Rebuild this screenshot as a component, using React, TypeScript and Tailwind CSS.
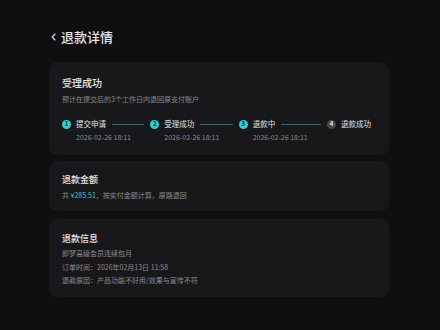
import { ReactNode } from 'react';

type Step = { label: string; time?: string; done: boolean };

const steps: Step[] = [
  { label: '提交申请', time: '2026-02-26 18:11', done: true },
  { label: '受理成功', time: '2026-02-26 18:11', done: true },
  { label: '退款中', time: '2026-02-26 18:11', done: true },
  { label: '退款成功', done: false }
];

function Card({ className, children }: { className?: string; children: ReactNode }) {
  return <section className={`w-[340px] rounded-[8px] bg-[#18181b] px-[13px] ${className ?? ''}`}>{children}</section>;
}

function StepDot({ index, done }: { index: number; done: boolean }) {
  return (
    <span
      className={`flex h-[9px] w-[9px] shrink-0 items-center justify-center rounded-full text-[6px] font-bold leading-none ${
        done ? 'bg-[#2fd1cf] text-[#0f2a2a]' : 'bg-[#46464b] text-[#e6e6e8]'
      }`}
    >
      {index}
    </span>
  );
}

export default function App() {
  return (
    <div className="h-[330px] w-[440px] overflow-hidden bg-[#0f0f11] pl-[49px] text-[#e8e8ea]" style={{ fontFamily: '"Noto Sans CJK SC", "Noto Sans", sans-serif' }}>
      <header className="mt-[28px] flex h-[18px] items-center">
        <svg width="5" height="8" viewBox="0 0 5 8" className="ml-[2px] mr-[10px]">
          <polyline points="4,1 1.2,4 4,7" fill="none" stroke="#e8e8ea" strokeWidth="1.1" strokeLinecap="round" strokeLinejoin="round" />
        </svg>
        <h1 className="-ml-[5px] text-[13px] font-medium leading-[18px]">退款详情</h1>
      </header>

      <Card className="mt-[16px] h-[93px] pt-[14px]">
        <h2 className="text-[10px] font-medium leading-[14px]">受理成功</h2>
        <p className="mt-[4px] text-[7px] leading-[10px] text-[#8b8b90]">预计在提交后的3个工作日内退回原支付账户</p>
        <div className="mr-[5px] mt-[15px] flex">
          {steps.map((step, i) => {
            const last = i === steps.length - 1;
            return (
              <div key={step.label} className={last ? 'shrink-0' : 'min-w-0 flex-1'}>
                <div className="flex h-[10px] items-center">
                  <StepDot index={i + 1} done={step.done} />
                  <span className="ml-[5px] whitespace-nowrap text-[7.5px] leading-[10px] text-[#e4e4e6]">{step.label}</span>
                  {!last && <span className="mx-[6px] h-px flex-1 bg-[#356a6c]" />}
                </div>
                {step.time && <div className="ml-[14px] mt-[3px] whitespace-nowrap text-[7px] leading-[10px] text-[#8b8b90]">{step.time}</div>}
              </div>
            );
          })}
        </div>
      </Card>

      <Card className="mt-[6px] h-[50px] pt-[13px]">
        <h2 className="text-[9px] font-medium leading-[12px]">退款金额</h2>
        <p className="mt-[4px] text-[7px] leading-[10px] text-[#8b8b90]">
          共 <span className="text-[#36cfc6]">¥285.51</span>，按实付金额计算，原路退回
        </p>
      </Card>

      <Card className="mt-[8px] h-[78px] pt-[14px]">
        <h2 className="text-[9px] font-medium leading-[12px]">退款信息</h2>
        <div className="mt-[2px] text-[7px] leading-[13.5px] text-[#8b8b90]">
          <p>即梦高级会员连续包月</p>
          <p>订单时间：2026年02月13日 11:58</p>
          <p>退款原因：产品功能不好用/效果与宣传不符</p>
        </div>
      </Card>
    </div>
  );
}
